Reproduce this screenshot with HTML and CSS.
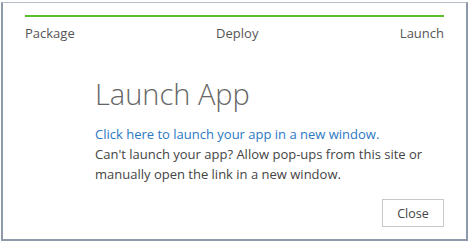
FILE: index.html
```html
<!DOCTYPE html>
<html lang="en">

<head>
    <meta charset="UTF-8">
    <title>Launch App</title>
    <link rel="stylesheet" href="styles.css">
</head>

<body>
    <div class="dialog">
        <div class="steps">
            <div class="progress"></div>
            <div class="step-labels">
                <span>Package</span>
                <span>Deploy</span>
                <span>Launch</span>
            </div>
        </div>

        <div class="content">
            <h1>Launch App</h1>
            <a href="#" class="launch-link">Click here to launch your app in a new window.</a>
            <p>Can't launch your app? Allow pop-ups from this site or manually open the link in a new window.</p>
        </div>

        <div class="actions">
            <button type="button" class="btn">Close</button>
        </div>
    </div>
</body>

</html>
```

FILE: styles.css
```css
* {
    margin: 0;
    padding: 0;
    box-sizing: border-box;
}

body {
    font-family: 'Open Sans', 'Noto Sans', sans-serif;
    background: white;
    width: 470px;
    height: 243px;
    padding: 2px 2px 2px 1px;
}

.dialog {
    width: 467px;
    height: 239px;
    border: 1px solid #b8bfcb;
    border-left: 2px solid #8e99aa;
    border-right: 2px solid #8e99aa;
    border-bottom: 2px solid #8e99aa;
    padding: 12px 22px 0 22px;
    display: flex;
    flex-direction: column;
}

.progress {
    height: 2px;
    background: #5bbd2b;
}

.step-labels {
    display: flex;
    justify-content: space-between;
    margin-top: 7px;
    font-size: 13px;
    color: #555;
}

.content {
    padding-left: 70px;
    margin-top: 34px;
}

.content h1 {
    font-size: 29px;
    font-weight: 300;
    color: #666;
    line-height: 36px;
    margin-bottom: 12px;
}

.launch-link {
    display: block;
    color: #2b78c2;
    text-decoration: none;
    font-size: 13px;
    line-height: 20px;
}

.content p {
    font-size: 13px;
    line-height: 20px;
    color: #444;
    width: 330px;
}

.actions {
    display: flex;
    justify-content: flex-end;
    margin-top: 15px;
}

.btn {
    width: 62px;
    height: 28px;
    background: white;
    border: 1px solid #c8c8c8;
    font-family: inherit;
    font-size: 12.5px;
    color: #444;
}
```
